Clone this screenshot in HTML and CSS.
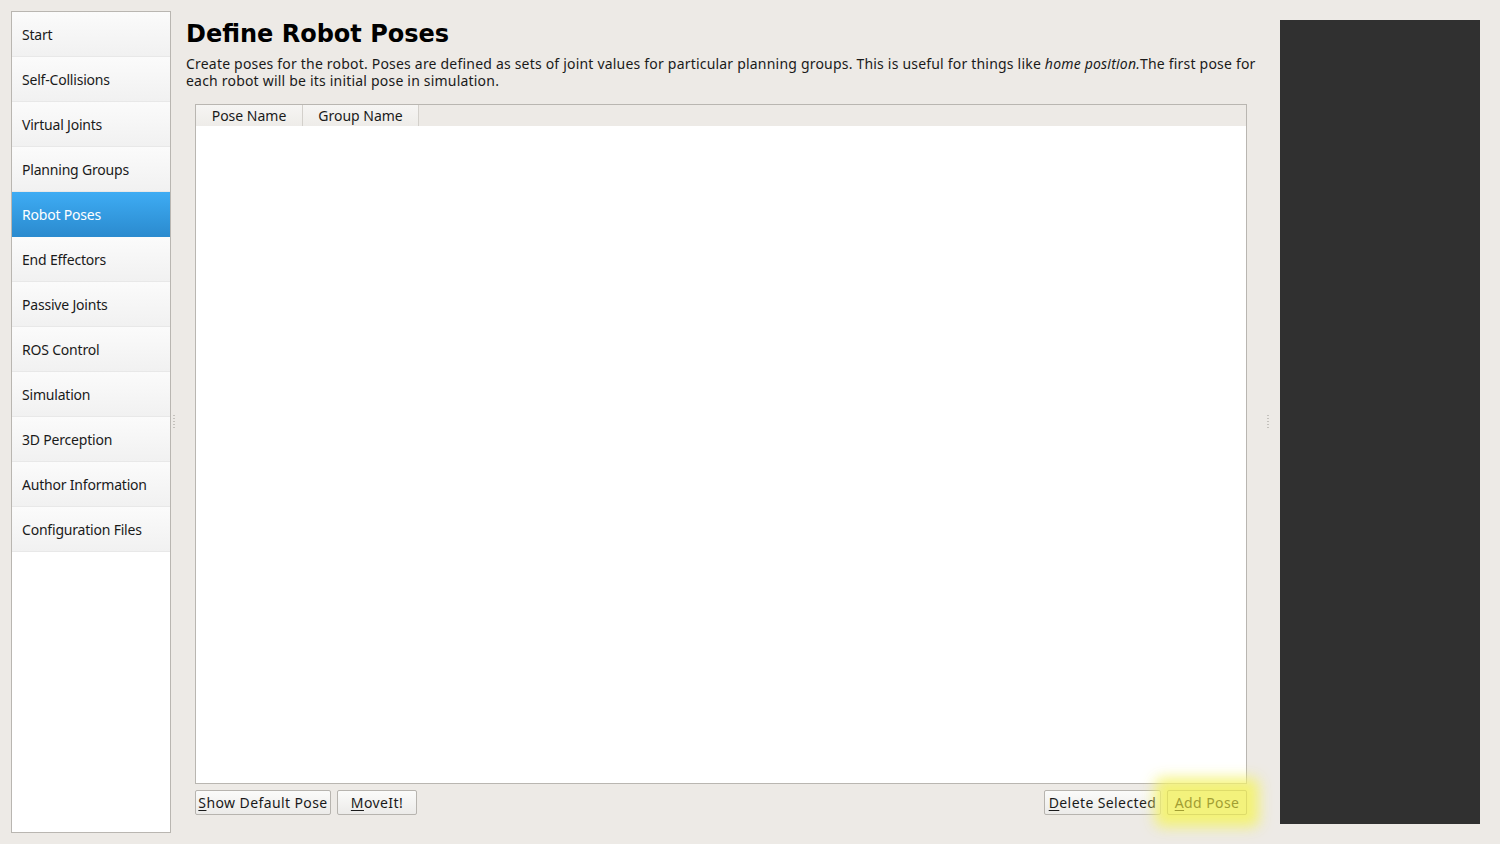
FILE: index.html
```html
<!DOCTYPE html>
<html>
<head>
<meta charset="utf-8">
<link rel="stylesheet" href="styles.css">
</head>
<body>
<div class="app">
  <nav class="sidebar">
    <div class="nav-item">Start</div>
    <div class="nav-item">Self-Collisions</div>
    <div class="nav-item">Virtual Joints</div>
    <div class="nav-item">Planning Groups</div>
    <div class="nav-item active">Robot Poses</div>
    <div class="nav-item">End Effectors</div>
    <div class="nav-item">Passive Joints</div>
    <div class="nav-item">ROS Control</div>
    <div class="nav-item">Simulation</div>
    <div class="nav-item">3D Perception</div>
    <div class="nav-item">Author Information</div>
    <div class="nav-item">Configuration Files</div>
  </nav>
  <div class="handle handle-left"><span class="dots"></span></div>
  <main class="main">
    <h1 class="title">Define Robot Poses</h1>
    <p class="desc">Create poses for the robot. Poses are defined as sets of joint values for particular planning groups. This is useful for things like <em>home position.</em>The first pose for each robot will be its initial pose in simulation.</p>
    <div class="table">
      <div class="table-head">
        <div class="th th-pose">Pose Name</div>
        <div class="th th-group">Group Name</div>
      </div>
      <div class="table-body"></div>
    </div>
    <div class="buttons">
      <button class="btn btn-show"><u>S</u>how Default Pose</button>
      <button class="btn btn-moveit"><u>M</u>oveIt!</button>
      <span class="spacer"></span>
      <button class="btn btn-delete"><u>D</u>elete Selected</button>
      <button class="btn btn-add"><u>A</u>dd Pose</button>
    </div>
  </main>
  <div class="handle handle-right"><span class="dots"></span></div>
  <aside class="viewer"></aside>
</div>
</body>
</html>
```

FILE: styles.css
```css
* { box-sizing: border-box; }
html, body {
  margin: 0;
  padding: 0;
  background: #edeae6;
  font-family: "Noto Sans", "DejaVu Sans", sans-serif;
  font-size: 14px;
  color: #1a1a1a;
}
.app {
  display: flex;
  width: 1500px;
  height: 844px;
}
.sidebar {
  width: 160px;
  margin: 11px 0 11px 11px;
  border: 1px solid #b9b6b1;
  background: #fff;
  display: flex;
  flex-direction: column;
  flex-shrink: 0;
}
.nav-item {
  height: 45px;
  padding-left: 10px;
  display: flex;
  align-items: center;
  background: linear-gradient(#fbfbfb, #f1f1f1);
  border-bottom: 1px solid #e8e8e8;
  color: #1a1a1a;
  letter-spacing: -0.2px;
}
.nav-item.active {
  background: linear-gradient(#3eacf4, #2b8bcf);
  color: #fff;
  border-bottom-color: #2b8bcf;
}
.handle {
  width: 15px;
  flex-shrink: 0;
  display: flex;
  align-items: center;
}
.handle-left { padding-left: 2px; }
.handle-right { width: 20px; padding-left: 7px; }
.dots {
  width: 2px;
  height: 16px;
  background-image: radial-gradient(circle, #c4c1bc 0.8px, transparent 1px);
  background-size: 2px 3px;
}
.main {
  flex: 1;
  padding-top: 18px;
  display: flex;
  flex-direction: column;
  min-width: 0;
}
.title {
  margin: 0;
  font-family: "DejaVu Sans", sans-serif;
  font-weight: bold;
  font-size: 24px;
  line-height: 32px;
  color: #000;
}
.desc {
  margin: 5px 0 0 0;
  width: 1074px;
  line-height: 17px;
  letter-spacing: 0.2px;
}
.desc em { font-style: italic; }
.table {
  margin: 15px 0 0 9px;
  width: 1052px;
  height: 680px;
  border: 1px solid #b9b6b1;
  background: #fff;
  display: flex;
  flex-direction: column;
}
.table-head {
  height: 21px;
  background: #edeae6;
  display: flex;
}
.th {
  height: 21px;
  display: flex;
  align-items: center;
  justify-content: center;
  background: linear-gradient(#f6f5f3, #eeece9);
  border-right: 1px solid #d3d0cb;
}
.th-pose { width: 107px; }
.th-group { width: 116px; }
.table-body { flex: 1; }
.buttons {
  display: flex;
  align-items: center;
  gap: 6px;
  margin: 6px 0 0 9px;
  width: 1052px;
}
.spacer { flex: 1; }
.btn {
  height: 25px;
  padding: 0;
  font-family: inherit;
  font-size: 14px;
  color: #1a1a1a;
  border: 1px solid #b7b4af;
  border-radius: 2px;
  background: linear-gradient(#fbfbfa, #ecebe9);
  letter-spacing: 0.4px;
}
.btn u { text-decoration-thickness: 1px; text-underline-offset: 2px; }
.btn-show { width: 136px; }
.btn-moveit { width: 80px; }
.btn-delete { width: 117px; }
.btn-add {
  width: 80px;
  color: #a29e33;
  background: #f3f27c;
  border-color: #dedc6a;
  box-shadow: 0 0 14px 12px rgba(244, 243, 105, 0.9);
}
.viewer {
  width: 200px;
  flex-shrink: 0;
  margin: 20px 20px 20px 0;
  background: #303030;
}
```
